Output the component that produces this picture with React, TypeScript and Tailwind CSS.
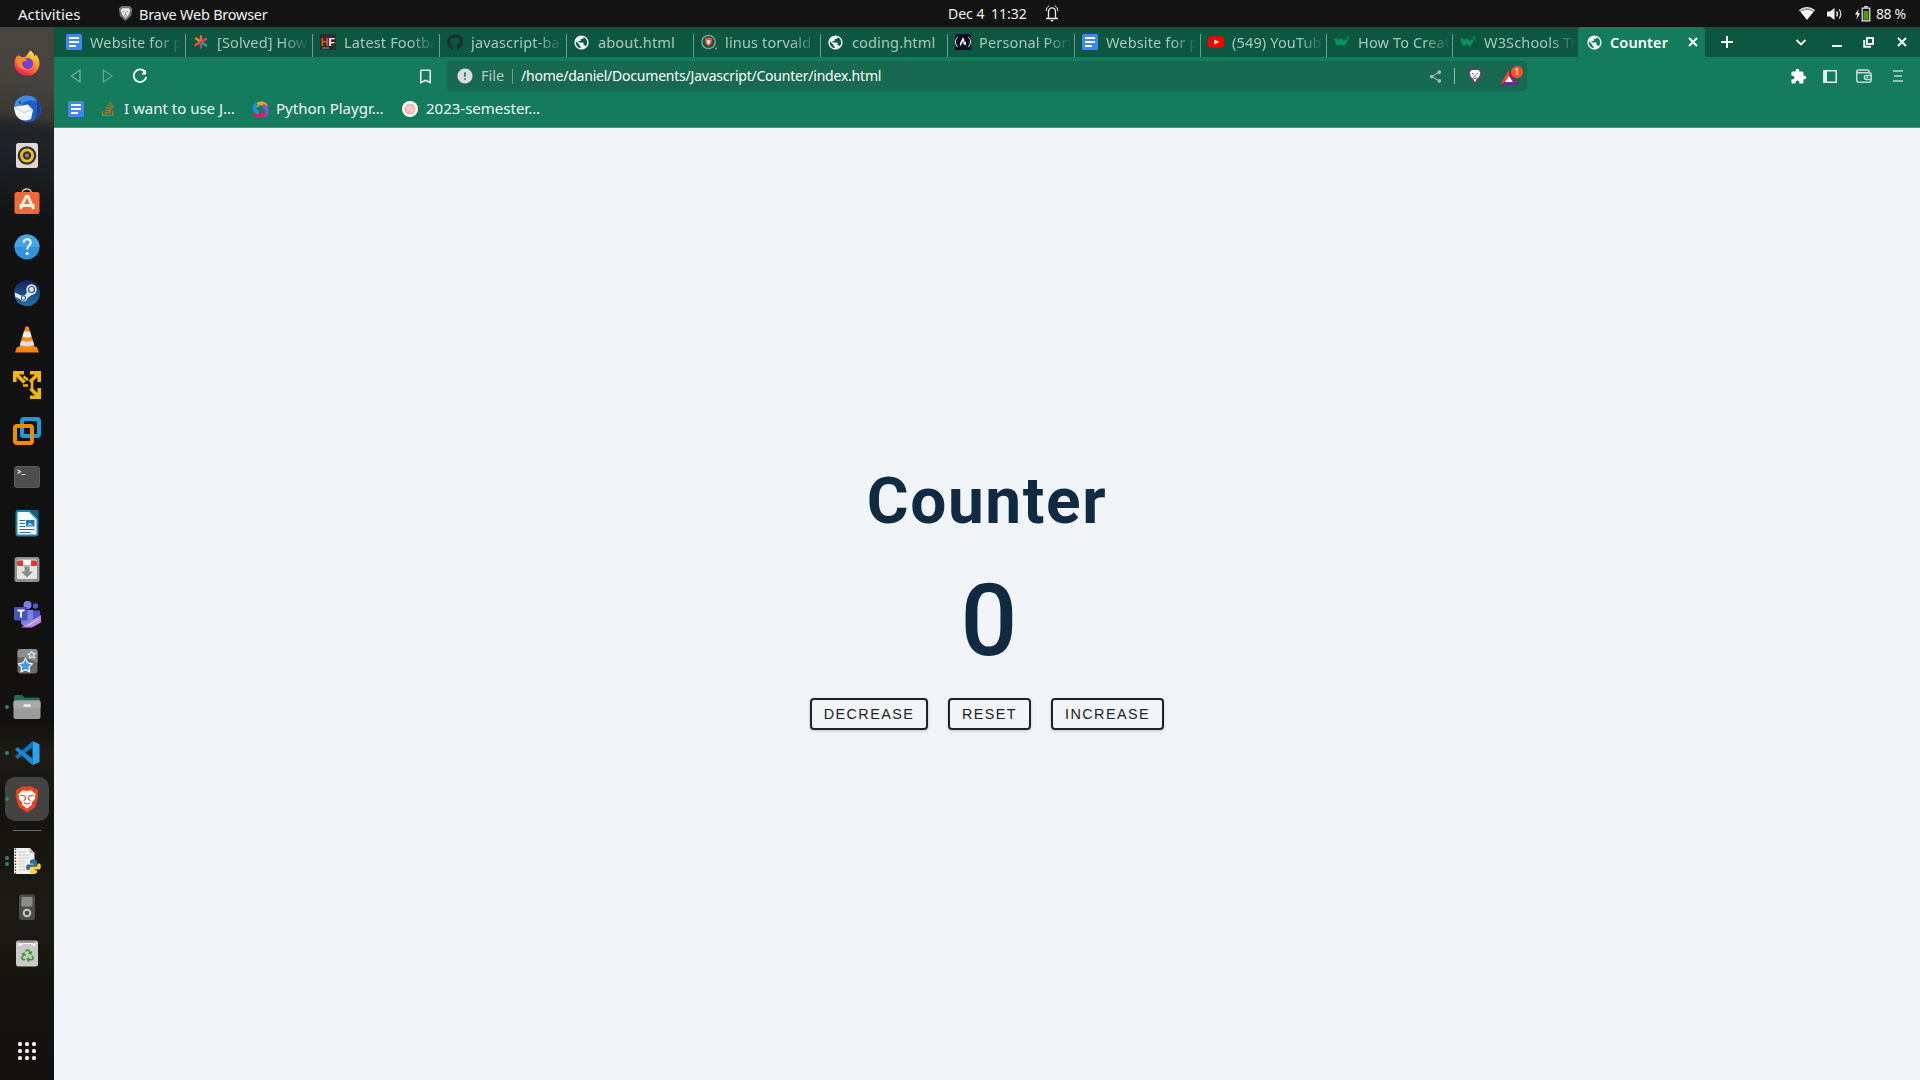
import { useState, type ReactNode } from 'react';
import { MdPublic, MdExtension, MdShare, MdBookmarkBorder, MdError } from 'react-icons/md';
import { FaGithub, FaStackOverflow, FaRecycle, FaFreeCodeCamp } from 'react-icons/fa';

/* ---------- favicons ---------- */

const Docs = () => (
  <svg viewBox="0 0 16 16" className="size-4">
    <rect width="16" height="16" rx="1.5" fill="#4285f4" />
    <path d="M3 4h10M3 8h10M3 12h7" stroke="#fff" strokeWidth="2" />
  </svg>
);
const Star = () => (
  <svg viewBox="0 0 16 16" className="size-4" strokeWidth="2.4" strokeLinecap="round">
    <path d="M8 8V2.2" stroke="#f2643d" />
    <path d="M8 8L3 4.5" stroke="#f48024" />
    <path d="M8 8L13 5" stroke="#e0455e" />
    <path d="M8 8L2.5 11" stroke="#e9554d" />
    <path d="M8 8L13 11.5" stroke="#2f9fb0" />
    <path d="M8 8V13.6" stroke="#a3526f" />
  </svg>
);
const HF = () => (
  <svg viewBox="0 0 16 16" className="size-4">
    <rect width="16" height="16" fill="#2b2b2b" />
    <text x="0.8" y="12" fontFamily="Liberation Sans" fontWeight="bold" fontSize="10.5" fill="#f05423">H</text>
    <text x="8.6" y="12" fontFamily="Liberation Sans" fontWeight="bold" fontSize="10.5" fill="#fff">F</text>
    <path d="M2 14h7" stroke="#999" />
  </svg>
);
const Github = () => <FaGithub className="size-4 text-[#24292f]" />;
const Globe = () => (
  <span className="flex h-4 w-[15px] justify-center">
    <MdPublic className="size-[17px] shrink-0 text-[#f1f3f4]" />
  </span>
);
const BraveSearch = () => (
  <svg viewBox="0 0 16 16" className="size-4">
    <circle cx="7.5" cy="8" r="6.7" fill="none" stroke="#8fa39c" strokeWidth="1.3" />
    <path d="M4 4.5L7.5 3.4 11 4.5 10.5 9.5 7.5 12.6 4.5 9.5z" fill="#f2542d" />
    <path d="M5.5 6.2h4L8.4 9.6 7.5 10.4 6.6 9.6z" fill="#fff" />
    <circle cx="15" cy="14.6" r="1" fill="#8fa39c" />
  </svg>
);
const Fcc = () => (
  <span className="flex size-4 items-center justify-center bg-[#0a0a23]">
    <FaFreeCodeCamp className="size-4 text-white" />
  </span>
);
const YouTube = () => (
  <svg viewBox="0 0 16 16" className="size-4">
    <rect y="2.2" width="16" height="11.6" rx="2.8" fill="#f00" />
    <path d="M6.3 5.6L11 8 6.3 10.4z" fill="#fff" />
  </svg>
);
const W3 = () => (
  <svg viewBox="0 0 16 16" className="size-4" fill="none" stroke="#059862">
    <path d="M1.5 4.5L4.2 11 6.7 5.4 9.2 11 12.2 6" strokeWidth="2.9" strokeLinejoin="bevel" />
    <path d="M12.6 2.6H15L13.7 4.2C15.4 4.2 15.2 6.3 12.7 5.9" strokeWidth="0.9" />
  </svg>
);

/* ---------- browser tabs ---------- */

type Tab = { icon: ReactNode; title: string; width: string };

const tabs: Tab[] = [
  { icon: <Docs />, title: 'Website for p', width: 'w-[127px]' },
  { icon: <Star />, title: '[Solved] How', width: 'w-[127px]' },
  { icon: <HF />, title: 'Latest Footba', width: 'w-[127px]' },
  { icon: <Github />, title: 'javascript-bas', width: 'w-[127px]' },
  { icon: <Globe />, title: 'about.html', width: 'w-[127px]' },
  { icon: <BraveSearch />, title: 'linus torvald -', width: 'w-[127px]' },
  { icon: <Globe />, title: 'coding.html', width: 'w-[127px]' },
  { icon: <Fcc />, title: 'Personal Port', width: 'w-[127px]' },
  { icon: <Docs />, title: 'Website for p', width: 'w-[126px]' },
  { icon: <YouTube />, title: '(549) YouTub', width: 'w-[126px]' },
  { icon: <W3 />, title: 'How To Creat', width: 'w-[126px]' },
  { icon: <W3 />, title: 'W3Schools Tr', width: 'w-[125px]' },
];

/* Titles that reach the tab's edge fade out; the short ones stay solid. */
const fades = (title: string) => !title.endsWith('.html');

function TabStrip() {
  return (
    <div className="flex h-[30px] shrink-0 bg-[#0b5740] pl-[5px]">
      {tabs.map((t, i) => (
        <div key={i} className={`relative flex h-full shrink-0 items-start pt-[7px] pl-[7px] ${t.width}`}>
          <span className="flex w-4 shrink-0">{t.icon}</span>
          <span
            className={`mt-[-3px] ml-2 w-[94px] overflow-hidden text-[14.5px] leading-[22px] tracking-[0.15px] whitespace-nowrap text-[#a9c8bd] ${
              fades(t.title) ? '[mask-image:linear-gradient(to_right,#000_70%,transparent_98%)]' : ''
            }`}
          >
            {t.title}
          </span>
          {i < tabs.length - 1 && <span className="absolute right-0 bottom-0 h-[23px] w-px bg-[#719c8f]" />}
        </div>
      ))}
      <div className="flex h-full w-[127px] shrink-0 items-start rounded-t-[4px] bg-[#147b5c] pt-[7px] pl-[9px]">
        <span className="flex w-4 shrink-0">
          <Globe />
        </span>
        <span className="mt-[-3px] ml-[7px] text-[14.5px] leading-[22px] font-semibold tracking-[0.1px] text-white">Counter</span>
        <svg viewBox="0 0 10 10" className="mt-[3px] mr-[7px] ml-auto size-[10px]" stroke="#fff" strokeWidth="1.9">
          <path d="M1 1l8 8M9 1L1 9" />
        </svg>
      </div>
      <svg viewBox="0 0 12 12" className="mt-[9px] ml-4 size-3" stroke="#fff" strokeWidth="2">
        <path d="M6 0v12M0 6h12" />
      </svg>
      <div className="ml-auto flex items-start pt-2 pr-[11px] text-[#f1f3f4]">
        <svg viewBox="0 0 14 14" className="size-[14px]" fill="none" stroke="currentColor" strokeWidth="1.9">
          <path d="M2.5 5L7 9.5 11.5 5" />
        </svg>
        <svg viewBox="0 0 14 14" className="ml-[22px] size-[14px]" stroke="currentColor" strokeWidth="2">
          <path d="M2 11h10" />
        </svg>
        <svg viewBox="0 0 14 14" className="ml-[18px] size-[14px]" fill="none" stroke="currentColor" strokeWidth="2">
          <path d="M5 3h6v6H5z" />
          <path d="M2.2 5v6.8H9" />
        </svg>
        <svg viewBox="0 0 14 14" className="ml-[19px] size-[14px]" stroke="currentColor" strokeWidth="2.1">
          <path d="M3 3l8 8M11 3l-8 8" />
        </svg>
      </div>
    </div>
  );
}

/* ---------- navigation and bookmarks ---------- */

function AddressBar() {
  return (
    <div className="flex h-[38px] shrink-0 items-center">
      <div className="flex h-[30px] w-[393px] items-center pl-4">
        <svg viewBox="0 0 12 14" className="h-[14px] w-3" fill="none" stroke="#73ac9a" strokeWidth="1.4">
          <path d="M10 1v12L1.3 7z" strokeLinejoin="round" />
        </svg>
        <svg viewBox="0 0 12 14" className="ml-5 h-[14px] w-3" fill="none" stroke="#61a28d" strokeWidth="1.4">
          <path d="M1.3 1v12L10.3 7z" strokeLinejoin="round" />
        </svg>
        <svg viewBox="0 0 16 16" className="ml-[18px] size-4" fill="none" stroke="#fff" strokeWidth="1.8">
          <path d="M12.6 3.4A6.3 6.3 0 1 0 14.2 9" />
          <circle cx="12.6" cy="4" r="1.6" fill="#fff" stroke="none" />
          <path d="M14 1.6v5H9.4z" fill="#fff" stroke="none" />
        </svg>
        <MdBookmarkBorder className="mr-[12px] ml-auto size-[19px] text-[#e8f1ee]" />
      </div>
      <div className="flex h-[30px] w-[1080px] shrink-0 items-center rounded-[4px] bg-[#17694f] pr-1 pl-[9px]">
        <MdError className="size-[18px] text-[#dadce0]" />
        <span className="-mt-px ml-[7px] w-[25px] text-[14.5px] whitespace-nowrap text-[#b6cfc6]">File</span>
        <span className="mr-2 ml-[6px] h-[15px] w-px bg-[#6c9f8e]" />
        <span className="-mt-px text-[14px] tracking-[-0.22px] whitespace-nowrap text-white">
          /home/daniel/Documents/Javascript/Counter/index.html
        </span>
        <MdShare className="ml-auto size-[15px] text-[#a8bdb6]" />
        <span className="mr-3 ml-[11px] h-4 w-px bg-[#9dbab0]" />
        <svg viewBox="0 0 16 18" className="h-[18px] w-4">
          <path d="M3 1h10l2.3 2.4-1 8.400L8 17.600 1.700 11.800l-1-8.400z" fill="#4c4d60" />
          <path d="M4.500 3h7l1.800 2.400-1.200 4.600-2 1.400L8 15l-2.100-3.600-2-1.400L2.700 5.400z" fill="#fff" />
          <path d="M4.800 6.500l2 .6M11.200 6.500l-2 .6M8 8v2M6 10.500L8 12l2-1.500" stroke="#4c4d60" strokeWidth="1" fill="none" />
        </svg>
        <div className="relative ml-[17px] flex h-[18px] w-[23px] items-end">
          <svg viewBox="0 0 18 15" className="h-[15px] w-[18px]">
            <path d="M9 0L0 15l6-3.700L9 6z" fill="#ff4724" />
            <path d="M0 15h18l-5.500-4H6z" fill="#662d91" />
            <path d="M9 0l9 15-5.500-4L9 5z" fill="#9e1f63" />
            <path d="M9 6l3.800 6H5.200z" fill="#fff" />
          </svg>
          <span className="absolute top-[-1px] right-0 flex size-3 items-center justify-center rounded-full bg-[#fb542b] text-[8px] leading-none text-white">
            1
          </span>
        </div>
      </div>
      <div className="ml-auto flex items-center pr-[17px] text-[#e4efeb]">
        <MdExtension className="size-[17px] text-white" />
        <svg viewBox="0 0 14 13" className="ml-4 h-[13px] w-[14px]" fill="none" stroke="currentColor" strokeWidth="1.500">
          <path d="M.8.8h12.400v11.400H.8z" />
          <path d="M2.500 1v11" strokeWidth="3" />
        </svg>
        <svg viewBox="0 0 16 14" className="ml-[19px] h-[14px] w-4" fill="none" stroke="#c3ddd4" strokeWidth="1.500">
          <path d="M13 3.500V2.300C13 1.300 12.500.9 11.500.9H2.300C1.300.9.8 1.400.8 2.300v8.900c0 1.400.6 2 2 2h10.400c1.400 0 2-.6 2-2V5.700c0-1.400-.6-2-2-2H2.500C1.500 3.700.8 3.200.8 2.300" />
          <path d="M15 6.500h-4.600a2 2 0 0 0 0 4H15M10.500 8.500h1.500" />
        </svg>
        <svg viewBox="0 0 10 12" className="ml-[21px] h-3 w-[10px]" stroke="#b9d8ce" strokeWidth="1.700">
          <path d="M0 1h10M1 6h8M0 11h10" />
        </svg>
      </div>
    </div>
  );
}

function Bookmarks() {
  return (
    <div className="flex h-8 shrink-0 items-start pt-[2px] pl-[14px] text-[15px] leading-[22px] whitespace-nowrap text-[#f2f8f6] [&>svg]:mt-[4px]">
      <Docs />
      <FaStackOverflow className="ml-4 size-4 text-[#c2701c]" />
      <span className="ml-[8px] w-[123px]">I want to use J…</span>
      <svg viewBox="0 0 17 17" className="ml-[5px] size-[17px] shrink-0" fill="none" strokeWidth="3.600">
        <path d="M4 6C5 1.500 12 1 14.500 5.500" stroke="#ffa300" />
        <path d="M10.500 4.500C16 6.500 16.500 12 11 15.200" stroke="#7e57e8" />
        <path d="M13 11.500C11 15.500 5 16.500 2 12.500" stroke="#f3125e" />
        <path d="M6.800 12C1.500 10.500.8 5.500 5.500 2.500" stroke="#1f8ded" />
      </svg>
      <span className="ml-[7px] w-[113px]">Python Playgr…</span>
      <svg viewBox="0 0 16 16" className="ml-[13px] size-4 shrink-0">
        <circle cx="8" cy="8" r="8" fill="#fff" />
        <circle cx="8" cy="8" r="5.600" fill="#f6b1ac" />
        <path d="M4 6l3 2-2 3M8 3.500l-1 3 3 1 2-2M8 12l1.500-3 3 .5" stroke="#fff" fill="none" strokeWidth=".8" />
      </svg>
      <span className="ml-[8px]">2023-semester…</span>
    </div>
  );
}

/* ---------- dock icons, all drawn on a 30px grid ---------- */

const Box = ({ children }: { children: ReactNode }) => (
  <svg viewBox="0 0 30 30" className="size-[30px]">
    {children}
  </svg>
);

const Firefox = () => (
  <Box>
    <defs>
      <linearGradient id="ff" x1="0.8" y1="0" x2="0.3" y2="1">
        <stop offset="0" stopColor="#fff44f" />
        <stop offset=".35" stopColor="#ffa52b" />
        <stop offset=".7" stopColor="#ff5a36" />
        <stop offset="1" stopColor="#f0146b" />
      </linearGradient>
    </defs>
    <path d="M18.500 2.500c2 1.500 3.500 3.500 4 6 1-.5 1-1.500 1-2.500 3 3.500 4 6.500 4 9.500a12.500 12.200 0 0 1-25 0c0-3 1-5.500 2.500-8l.5 1.500 1.300-2.500c.5 2 1.700 2 3.200 2.500 1 .5 2-.5 3.500-.3C15 7 16.500 4.500 18.500 2.500z" fill="url(#ff)" />
    <circle cx="15.500" cy="15.500" r="5.600" fill="#7340dc" />
    <path d="M4 9.500c4-1.500 8 0 11 2.500-1.500 1.800-3.500 1-5 2.500 0 4 2 6.500 6 6.500-4 3-12-1-12-11.500z" fill="#ff8a24" />
  </Box>
);
const Thunderbird = () => (
  <Box>
    <circle cx="16" cy="15" r="13" fill="#1f5fbf" />
    <path d="M3 19C0 10 5 2 14 1.500c6 0 9 2 12 6-8-2-15-1-17 4z" fill="#3f8fe0" />
    <path d="M24 5c6 6 6 15-1 21 2-6 3-12 1-21z" fill="#173f92" />
    <path d="M2 13l14-2.500 5 5.500-2 9C13 28 6 26 3.500 20z" fill="#f6f7fb" />
    <path d="M2.500 13.500L12 18.500l8.500-3" stroke="#c3cadb" fill="none" />
    <circle cx="8" cy="8.500" r="1" fill="#222" />
  </Box>
);
const Rhythmbox = () => (
  <Box>
    <rect x="4" y="3" width="22" height="25" rx="2.500" fill="#dfd9d4" />
    <circle cx="15" cy="15.500" r="9.300" fill="#30302e" />
    <circle cx="15" cy="15.500" r="7" fill="#f2bd22" />
    <circle cx="15" cy="15.500" r="4.200" fill="#343331" />
    <circle cx="15" cy="15.500" r="2" fill="#8a8782" />
  </Box>
);
const Software = () => (
  <Box>
    <path d="M10 7.500c0-6 9.500-6 9.500 0" fill="none" stroke="#d9c0a0" strokeWidth="1.500" />
    <rect x="2.500" y="6" width="25" height="22" rx="2.500" fill="#f0693a" />
    <path d="M8.500 23L14 10.500h2L21.500 23M7.500 19.500h15" stroke="#fff1e8" strokeWidth="2.800" fill="none" />
  </Box>
);
const Help = () => (
  <Box>
    <circle cx="15" cy="15" r="12.500" fill="#2f94dc" />
    <path d="M2.500 15a12.500 12.500 0 0 1 25 0z" fill="#43a5e8" />
    <path d="M11.500 10.500c.7-4.500 7.600-4 7.200.3-.3 3-3.500 3.200-3.500 6.700" fill="none" stroke="#fff" strokeWidth="2" />
    <circle cx="15.200" cy="21.500" r="1.500" fill="#fff" />
  </Box>
);
const Steam = () => (
  <span className="flex size-[26px] items-center justify-center rounded-full bg-linear-to-b from-[#13245a] to-[#1d74ae]">
    <svg viewBox="0 0 26 26" className="size-[26px]">
      <path d="M.8 12.500l7 3.200 3.500-.7 2.500-4.500L19 14l-5.500 4c-.5 4-5 4.500-7 1.500L1.300 17z" fill="#e4e9ee" />
      <circle cx="17.500" cy="9.500" r="5.200" fill="#e4e9ee" />
      <circle cx="17.500" cy="9.500" r="3" fill="none" stroke="#35507c" strokeWidth="1.200" />
      <circle cx="9.500" cy="18" r="2.200" fill="none" stroke="#23477a" strokeWidth="1" />
    </svg>
  </span>
);
const Vlc = () => (
  <Box>
    <path d="M5 23h20l2 5.500H3z" fill="#f4830e" />
    <path d="M13.500 2.500h3L23 23.500c-3 2.500-13 2.500-16 0z" fill="#f58a16" />
    <path d="M12 7.500h6l1.600 5c-2.500 1.500-6.500 1.500-9.200 0z" fill="#ececec" />
    <path d="M9.300 16.500c3 1.500 8.500 1.500 11.400 0L22 20.800c-4 2.200-10 2.200-14 0z" fill="#dedede" />
  </Box>
);
const VmPlayer = () => (
  <Box>
    <g stroke="#f2b50c" strokeWidth="3.600" fill="none">
      <path d="M2.800 12V2.800H12M3 3l9.500 9.500M18 2.800h9.200V12M27 3l-9 9M27.200 18v9.200H18M27 27l-8.500-8.500" />
      <path d="M11.500 6.500l4.500 3.500M11 15.500h5M20 11v8" strokeWidth="2.600" />
    </g>
  </Box>
);
const VmWorkstation = () => (
  <Box>
    <rect x="10" y="3" width="17" height="17" rx="2" fill="none" stroke="#1a9cd8" strokeWidth="4" />
    <rect x="3" y="10" width="17" height="17" rx="2" fill="none" stroke="#f38b00" strokeWidth="4" />
    <path d="M10 14v4a2 2 0 0 0 2 2h4" fill="none" stroke="#1a9cd8" strokeWidth="4" />
  </Box>
);
const Terminal = () => (
  <Box>
    <rect x="2.500" y="4.500" width="25" height="21" rx="2.500" fill="#4e4e4e" stroke="#686868" strokeWidth=".8" />
    <path d="M5.500 8l3 1.800-3 1.800M9.500 12.500h4" stroke="#e8e8e8" strokeWidth="1.200" fill="none" />
  </Box>
);
const Writer = () => (
  <Box>
    <path d="M6.500 3h11l8 8v14.500a2 2 0 0 1-2 2h-17a2 2 0 0 1-2-2V5a2 2 0 0 1 2-2z" fill="#f5fafd" stroke="#1c82b8" strokeWidth="2" />
    <path d="M18 2h8.500v8.500z" fill="#0e5f8e" />
    <path d="M7.500 12.500h5.500M7.500 15.500h5.500M7.500 18.500h5.500M7.500 21.500h15M7.500 24.500h11" stroke="#1c6f9f" strokeWidth="1.200" />
    <rect x="14" y="12" width="8.500" height="6.500" fill="#1c78ae" />
    <path d="M15 17.500l2.500-3 4 3z" fill="#9ad0ec" />
  </Box>
);
const Downloader = () => (
  <Box>
    <rect x="2.500" y="3" width="25" height="25" rx="2.500" fill="#8f8f8d" />
    <rect x="5" y="5.500" width="20" height="19.500" rx="1.500" fill="#e4e4e0" />
    <rect x="5" y="6.500" width="20" height="5.500" rx="1.500" fill="#e8322e" />
    <rect x="11" y="6" width="8" height="5.500" fill="#fff" />
    <path d="M12.500 12.500h5v5H21l-6 6-6-6h3.500z" fill="#8b8b8b" />
  </Box>
);
const Teams = () => (
  <Box>
    <circle cx="15.500" cy="5" r="4" fill="#7b83eb" />
    <circle cx="23.500" cy="6" r="2.700" fill="#5059c9" />
    <path d="M19 10.500h9V20c-2 3-7 4-9 2z" fill="#5059c9" />
    <path d="M9 10h12v12c-2 5-10 6-12 1z" fill="#7b83eb" />
    <rect x="2" y="7" width="13.500" height="13.500" rx="1.200" fill="#4a53bc" />
    <path d="M5.500 10.500h7M9 10.500V17.500" stroke="#fff" strokeWidth="1.900" />
    <path d="M9 27.500L29 15v7.500L20 27.500z" fill="#b98be0" />
    <path d="M15.500 25.500L27 18.800" stroke="#ead8f6" strokeWidth="1.400" strokeDasharray="1.300 .6" />
  </Box>
);
const Anki = () => (
  <Box>
    <rect x="5.500" y="3" width="20" height="24.500" rx="3" fill="#6a6a6a" />
    <path d="M5.500 11c7 0 13 2 20 5.500V6a3 3 0 0 0-3-3h-14a3 3 0 0 0-3 3z" fill="#8d8d8d" />
    <path d="M13.500 12.800l2.200 4 4.500 1-3.200 3.300.5 4.600-4.200-2-4.200 2 .5-4.600-3-3.300 4.500-1z" fill="#3d9ce5" stroke="#fff" strokeWidth="1.200" />
    <path d="M19.500 5l1.100 2.300 2.700.1-1.700 2 .8 2.500-2.500-1-2.200 1.400.1-2.600-2-1.700 2.600-.6z" fill="#5fb4f0" stroke="#fff" strokeWidth=".9" />
  </Box>
);
const Files = () => (
  <Box>
    <path d="M2 5a2 2 0 0 1 2-2h6.500l2 2.500H26a2 2 0 0 1 2 2V20H2z" fill="#23695f" />
    <rect x="1.500" y="8.500" width="27" height="18.500" rx="2" fill="#9b9b9b" />
    <rect x="1.500" y="8.500" width="27" height="8" rx="2" fill="#a9a9a9" />
    <rect x="11.500" y="12.500" width="7" height="2" rx=".6" fill="#fff" />
  </Box>
);
const TextEditor = () => (
  <Box>
    <path d="M2 2h16l4.500 5v21H2z" fill="#f2f2f0" />
    <path d="M17.500 2l5 6-5-1.500z" fill="#b5b5b3" />
    <path d="M3.400 2.500V28" stroke="#444" strokeWidth="1.400" strokeDasharray="1.500 1.500" />
    <path d="M6.500 6h8M6.500 9h12M6.500 12h10M6.500 15h8M6.500 18h6M6.500 21h7M6.500 24h10" stroke="#c2c2c0" strokeWidth="1" strokeDasharray="3 .8" />
    <path d="M18 17.800v-2.300c0-3 7-3 7 0v4c0 1-.8 1.500-1.500 1.500h-4c-1.500 0-2 1.500-2 3H16c-2.500 0-2.500-5.500 0-5.500h5.500v-.7z" fill="#32699d" />
    <path d="M25.500 17.500h1.500c2.500 0 2.500 6 0 6h-5.200v.7H25v2c0 2.300-7 2.300-7 0v-3.700c0-1 .8-1.700 1.800-1.700h4c1 0 1.700-.8 1.700-1.800z" fill="#ffd43b" />
  </Box>
);
const Player = () => (
  <Box>
    <rect x="7" y="2.500" width="16" height="25.500" rx="2.500" fill="#4c4c4c" />
    <rect x="9.500" y="5" width="11" height="9.500" rx="1" fill="#8c8c8c" />
    <circle cx="15" cy="21" r="3.300" fill="none" stroke="#c6c6c6" strokeWidth="2" />
  </Box>
);
const Trash = () => (
  <span className="relative flex size-[30px] items-center justify-center">
    <svg viewBox="0 0 30 30" className="absolute inset-0">
      <rect x="4" y="2.500" width="22" height="26" rx="2.500" fill="#c9c9c7" />
      <path d="M6.500 4h17v4h-2l-3-2h-7l-3 2h-2z" fill="#f4f4f4" />
      <path d="M6.500 4h17" stroke="#555" />
    </svg>
    <FaRecycle className="relative mt-[4px] size-[13px] text-[#3f9b32]" />
  </span>
);
const VsCode = () => (
  <Box>
    <path d="M20.500 3L27.500 6.200V24L20.500 27.200z" fill="#29a3ee" />
    <path d="M20.500 3L3 18.500l2.500 2.500L20.500 9.500z" fill="#0d74bd" />
    <path d="M20.500 27.200L3 11.500 5.500 9l15 11.500z" fill="#1687d4" />
  </Box>
);
const BraveApp = () => (
  <svg viewBox="0 0 26 30" className="h-[29px] w-[26px]">
    <path d="M7.500 1.500h11l2.300 2.400 2-.3 1.900 3-.8 2.300.8 2.500-3.200 11.300L13 28.500l-8.500-5.800L1.300 11.400l.8-2.500-.8-2.300 1.900-3 2 .3z" fill="#f1411c" />
    <path d="M8.500 5.500l4.500.8 4.500-.8 4.500 4-.8 2.500.3 2-3.500 4 .3 2.300L13 24.500l-5.300-4.200.3-2.300L4.500 14l.3-2L4 9.500z" fill="#fff" />
    <path d="M6 10.500l4.800.8.8 2.700-2 2.500M20 10.500l-4.800.8-.8 2.700 2 2.500M10 18.300l3 1.500 3-1.500" stroke="#f1411c" strokeWidth="1.100" fill="none" />
  </svg>
);

type DockItem = { icon: ReactNode; dots?: number; active?: boolean };

const dockItems: DockItem[] = [
  { icon: <Firefox /> },
  { icon: <Thunderbird /> },
  { icon: <Rhythmbox /> },
  { icon: <Software /> },
  { icon: <Help /> },
  { icon: <Steam /> },
  { icon: <Vlc /> },
  { icon: <VmPlayer /> },
  { icon: <VmWorkstation /> },
  { icon: <Terminal /> },
  { icon: <Writer /> },
  { icon: <Downloader /> },
  { icon: <Teams /> },
  { icon: <Anki /> },
  { icon: <Files />, dots: 1 },
  { icon: <VsCode />, dots: 1 },
  { icon: <BraveApp />, dots: 1, active: true },
];

const mountedItems: DockItem[] = [{ icon: <TextEditor />, dots: 2 }, { icon: <Player /> }, { icon: <Trash /> }];

function DockButton({ icon, dots = 0, active }: DockItem) {
  return (
    <div className="relative flex h-[46px] w-full shrink-0 items-center justify-center">
      <div className={`flex size-11 items-center justify-center rounded-[10px] ${active ? 'bg-[#434342]' : ''}`}>{icon}</div>
      <div className="absolute inset-y-0 left-[5px] flex flex-col items-center justify-center gap-[2px]">
        {Array.from({ length: dots }, (_, i) => (
          <span key={i} className="size-1 rounded-full bg-[#2f8279]" />
        ))}
      </div>
    </div>
  );
}

function Dock() {
  return (
    <aside className="flex w-[54px] shrink-0 flex-col items-center bg-[linear-gradient(to_bottom,#1a1a16_0%,#12110f_40%,#12110f_66%,#1e1c15_69%,#14130f_74%,#1c1a14_84%,#14130f_92%,#121110_100%)]">
      <div className="flex w-full flex-1 flex-col items-center bg-[linear-gradient(188deg,#484541_0px,#46423e_60px,#3b3733_92px,#22252a_102px,#1a1d21_150px,#131416_190px,#111111_230px,#111111_560px,transparent_680px)] pt-[13px]">
        {dockItems.map((d, i) => (
          <DockButton key={i} {...d} />
        ))}
        <span className="mt-[8px] mb-[7px] h-px w-7 shrink-0 bg-[#6b6a68]" />
        {mountedItems.map((d, i) => (
          <DockButton key={i} {...d} />
        ))}
        <div className="mt-auto mb-5 grid grid-cols-3 gap-[3px]">
          {Array.from({ length: 9 }, (_, i) => (
            <span key={i} className="size-1 rounded-[1.500px] bg-[#ececec]" />
          ))}
        </div>
      </div>
    </aside>
  );
}

/* ---------- desktop top bar ---------- */

function TopBar() {
  return (
    <header className="grid h-[27px] shrink-0 grid-cols-[948px_1fr_auto] items-center bg-[#131313] text-[14px] leading-[26px] whitespace-nowrap text-[#f0f0f0]">
      <div className="flex items-center pl-[18px]">
        <span className="w-[100px] text-[15px]">Activities</span>
        <svg viewBox="0 0 16 18" className="h-[17px] w-[15px]">
          <path d="M4 1h8l3 2.500-1 8L8 17 2 11.500l-1-8z" fill="#777" />
          <path d="M4.500 3.500h7l1.500 2-1.500 4.500L8 14 4.500 10 3 5.500z" fill="#eee" />
          <path d="M5 6.500l2 .7M11 6.500l-2 .7M8 8v2.500M6.500 11l1.500 1 1.500-1" stroke="#777" fill="none" />
        </svg>
        <span className="ml-[6px] text-[14.500px] tracking-[-0.25px]">Brave Web Browser</span>
      </div>
      <div className="flex items-center">
        <span className="w-[36px]">Dec 4</span>
        <span className="ml-[7px] w-[36px]">11:32</span>
        <svg viewBox="0 0 14 17" className="ml-[18px] h-[17px] w-[14px]" fill="none" stroke="#f0f0f0">
          <path d="M3.500 12.500V7c0-5.500 7-5.500 7 0v5.500M1 13.500h12" strokeWidth="1.300" />
          <path d="M5 15h4L7 16.800z" fill="#f0f0f0" stroke="none" />
          <path d="M1.300 6C1.300 3 2.500 1.500 4.300.8M12.700 6c0-3-1.200-4.500-3-5.200" />
        </svg>
      </div>
      <div className="flex items-center pr-[12px]">
        <svg viewBox="0 0 16 13" className="h-[13px] w-4">
          <path d="M.5 3.500C5 0 11 0 15.500 3.500L8 12.700z" fill="#8a8a8a" />
          <path d="M1.500 4.800C5.500 2.500 10.500 2.500 14.500 4.800L8 12.700z" fill="#fff" />
          <path d="M.3 3.600C5-.4 11-.4 15.700 3.600" stroke="#eee" fill="none" strokeWidth="1.200" />
        </svg>
        <svg viewBox="0 0 16 14" className="ml-[12px] h-[14px] w-4" fill="none" stroke="#ddd">
          <path d="M0 4.500h3L7.500 1v12L3 9.500H0z" fill="#f2f2f2" stroke="none" />
          <path d="M9.500 4.500c1.200 1.500 1.200 3.500 0 5" strokeWidth="1.400" />
          <path d="M12 2.500c2.500 2.500 2.500 6.500 0 9" strokeWidth="1.200" />
        </svg>
        <svg viewBox="0 0 16 16" className="ml-[12px] h-4 w-4">
          <path d="M3.800 3L0 8.500h2.500L1.200 13.500 5.200 7.200H2.800z" fill="#fff" />
          <path d="M7.200 2.200h7.600v12.600H7.200z" fill="#131313" stroke="#eee" strokeWidth="1.200" />
          <path d="M9 .8h4" stroke="#eee" strokeWidth="1.400" />
          <path d="M8.400 5h5.200v8.800H8.400z" fill="#4e9a06" />
        </svg>
        <span className="ml-[5px] w-[32px] tracking-[-0.4px]">88 %</span>
      </div>
    </header>
  );
}

/* ---------- counter page ---------- */

const buttonBase =
  'h-8 rounded-[4px] border-2 border-[#222] font-["Liberation_Sans",sans-serif] text-[14.400px] leading-none font-normal tracking-[1.440px] text-[#222] uppercase shadow-[0_1px_3px_rgba(0,0,0,0.2)]';

function CounterPage() {
  const [count, setCount] = useState(0);
  return (
    <main className="flex flex-1 flex-col items-center bg-[#f1f5f8] pt-[334px] font-[Roboto,sans-serif] font-bold text-[#102a42]">
      <h1 className="h-20 text-[64px] leading-[80px] tracking-[1.600px]">Counter</h1>
      <span className="mt-[4px] h-[150px] pl-[4px] text-[100px] leading-[150px] font-medium">{count}</span>
      <div className="mt-[2px] flex gap-5">
        <button className={`w-[118px] ${buttonBase}`} onClick={() => setCount(count - 1)}>
          decrease
        </button>
        <button className={`w-[83px] ${buttonBase}`} onClick={() => setCount(0)}>
          reset
        </button>
        <button className={`w-[113px] ${buttonBase}`} onClick={() => setCount(count + 1)}>
          increase
        </button>
      </div>
    </main>
  );
}

export default function App() {
  return (
    <div className="flex h-[1080px] w-[1920px] flex-col overflow-hidden font-['Noto_Sans',sans-serif]">
      <TopBar />
      <div className="flex min-h-0 flex-1">
        <Dock />
        <div className="flex min-w-0 flex-1 flex-col">
          <TabStrip />
          <div className="flex h-[71px] shrink-0 flex-col border-b border-[#4a977f] bg-[#147b5c]">
            <AddressBar />
            <Bookmarks />
          </div>
          <CounterPage />
        </div>
      </div>
    </div>
  );
}
